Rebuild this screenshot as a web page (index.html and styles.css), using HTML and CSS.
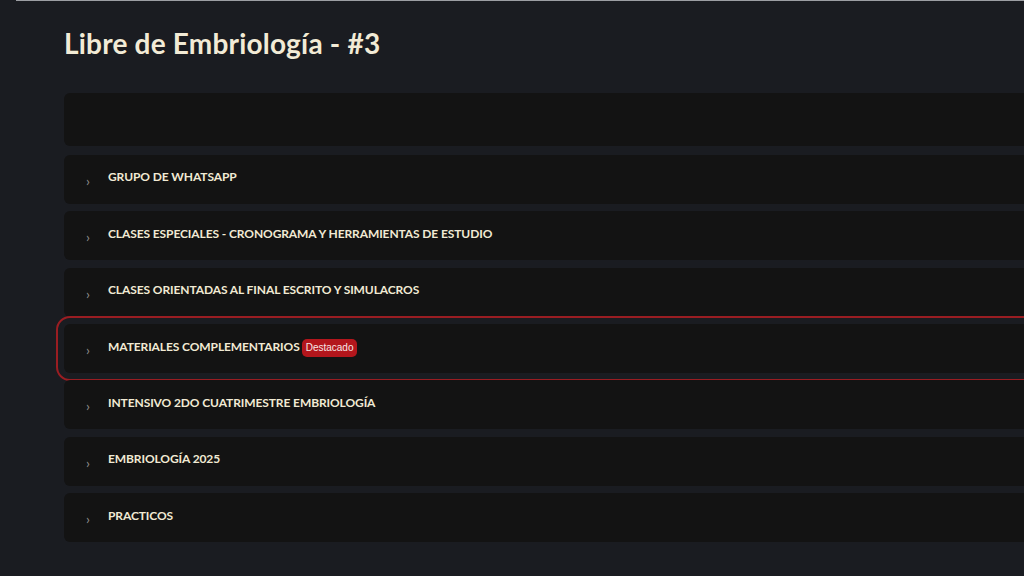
FILE: index.html
```html
<!DOCTYPE html>
<html lang="es">
<head>
<meta charset="utf-8">
<title>Libre de Embriología - #3</title>
<link rel="stylesheet" href="styles.css">
</head>
<body>
<div class="topline"></div>
<main class="page">
  <h1 class="title">Libre de Embriología - #3</h1>
  <div class="list">
    <div class="card card-empty"></div>
    <div class="card row"><span class="chev">›</span><span class="label">GRUPO DE WHATSAPP</span></div>
    <div class="card row"><span class="chev">›</span><span class="label">CLASES ESPECIALES - CRONOGRAMA Y HERRAMIENTAS DE ESTUDIO</span></div>
    <div class="card row"><span class="chev">›</span><span class="label">CLASES ORIENTADAS AL FINAL ESCRITO Y SIMULACROS</span></div>
    <div class="card row featured"><span class="chev">›</span><span class="label">MATERIALES COMPLEMENTARIOS</span><span class="badge">Destacado</span></div>
    <div class="card row"><span class="chev">›</span><span class="label">INTENSIVO 2DO CUATRIMESTRE EMBRIOLOGÍA</span></div>
    <div class="card row"><span class="chev">›</span><span class="label">EMBRIOLOGÍA 2025</span></div>
    <div class="card row"><span class="chev">›</span><span class="label">PRACTICOS</span></div>
  </div>
</main>
</body>
</html>
```
FILE: styles.css
```css
html, body {
  margin: 0;
  padding: 0;
  background: #1a1c21;
  overflow: hidden;
  height: 576px;
}
body {
  font-family: Lato, "Open Sans", sans-serif;
  color: #f1ead4;
}
.topline {
  margin-left: 16px;
  height: 1px;
  background: #9c9ea3;
}
.page {
  padding: 0 0 0 64px;
}
.title {
  margin: 0;
  padding-top: 25px;
  height: 92px;
  box-sizing: border-box;
  font-size: 28px;
  font-weight: 700;
  line-height: 34px;
  color: #f2ebd6;
  letter-spacing: 0.2px;
}
.list {
  display: flex;
  flex-direction: column;
  gap: 7.4px;
  margin-right: -20px;
}
.card {
  background: #131313;
  border-radius: 6px;
}
.card-empty {
  height: 53px;
  margin-bottom: 1.5px;
}
.row {
  height: 49px;
  display: flex;
  align-items: center;
  padding-left: 22px;
}
.chev {
  width: 22px;
  font-size: 14px;
  color: #8f8f8f;
  padding-top: 2px;
}
.label {
  font-size: 12px;
  font-weight: 700;
  color: #f1ead4;
  letter-spacing: -0.1px;
  padding-bottom: 5px;
}
.featured {
  outline: 2px solid #9a1d22;
  outline-offset: 6px;
  border-radius: 6px;
}
.badge {
  margin-left: 2px;
  background: #b3161c;
  color: #f6e6e6;
  font-family: "Liberation Sans", Arial, sans-serif;
  font-size: 10px;
  line-height: 18px;
  padding: 0 4px;
  border-radius: 5px;
  margin-bottom: 1px;
}
```
